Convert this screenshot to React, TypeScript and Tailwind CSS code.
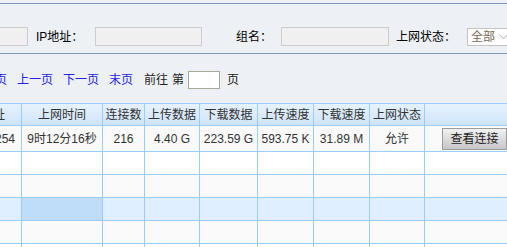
import React from 'react'

const font = { fontFamily: '"Liberation Sans", "Noto Sans CJK SC", sans-serif' }

const cols = ['w-[82px]', 'w-[81px]', 'w-[42px]', 'w-[55px]', 'w-[58px]', 'w-[56px]', 'w-[56px]', 'w-[55px]', 'w-[100px]']

const headers = ['IP地址', '上网时间', '连接数', '上传数据', '下载数据', '上传速度', '下载速度', '上网状态', '']

const dataRow = ['192.168.1.254', '9时12分16秒', '216', '4.40 G', '223.59 G', '593.75 K', '31.89 M', '允许']

function Cell({ i, children, className = '' }: { i: number; children?: React.ReactNode; className?: string }) {
  return (
    <div
      className={`${cols[i]} shrink-0 border-r border-b border-[#99ccff] flex items-center justify-center overflow-hidden whitespace-nowrap ${className}`}
    >
      {children}
    </div>
  )
}

export default function App() {
  const emptyRows = ['bg-white', 'bg-[#fafafa]', 'bg-[#e0efff]', 'bg-[#fafafa]']

  return (
    <div className="w-[507px] h-[247px] overflow-hidden bg-[#edf1f5] pt-[3px] text-[12px] text-[#222]" style={font}>
      {/* filter panel */}
      <div className="h-[51px] border-y border-[#7d99b9] pt-[23px]">
        <div className="flex items-center">
          <input className="ml-[-80px] w-[108px] h-[19px] bg-[#f0f0f0] border border-[#cccccc] shrink-0" />
          <span className="ml-[8px] w-[48px] shrink-0 text-black">IP地址：</span>
          <input className="ml-[11px] w-[107px] h-[19px] bg-[#f0f0f0] border border-[#cccccc] shrink-0" />
          <span className="ml-[34px] w-[36px] shrink-0 text-black">组名：</span>
          <input className="ml-[9px] w-[108px] h-[19px] bg-[#f0f0f0] border border-[#cccccc] shrink-0" />
          <span className="ml-[7px] w-[60px] shrink-0 text-black">上网状态：</span>
          <div className="ml-[11px] w-[60px] h-[18px] shrink-0 bg-white border border-[#c4c4c4] flex items-center pl-[3px] text-[#7a6a5a]">
            全部
            <svg className="ml-[4px]" width="9" height="6" viewBox="0 0 9 6">
              <path d="M0.5 0.5 L4.5 5 L8.5 0.5" fill="none" stroke="#b0b0b0" strokeWidth="1" />
            </svg>
          </div>
        </div>
      </div>

      {/* pager */}
      <div className="flex items-center h-[18px] mt-[17px] whitespace-nowrap">
        <span className="ml-[-17px] w-[24px] shrink-0 text-[#2222ee]">首页</span>
        <span className="ml-[10px] w-[36px] shrink-0 text-[#2222ee]">上一页</span>
        <span className="ml-[10px] w-[36px] shrink-0 text-[#2222ee]">下一页</span>
        <span className="ml-[10px] w-[24px] shrink-0 text-[#2222ee]">末页</span>
        <span className="ml-[11px] w-[24px] shrink-0">前往</span>
        <span className="ml-[4px] w-[12px] shrink-0">第</span>
        <input className="ml-[4px] w-[32px] h-[18px] shrink-0 bg-white border border-[#a8a898]" />
        <span className="ml-[7px] shrink-0">页</span>
      </div>

      {/* table */}
      <div className="mt-[14px] ml-[-60px] border-t border-[#99ccff] text-[#333]">
        <div className="flex h-[22px] bg-gradient-to-b from-[#e6f2fe] to-[#cde3f9]">
          {headers.map((h, i) => (
            <Cell key={i} i={i} className={i === 0 ? 'justify-end pr-[16px]' : ''}>
              {h}
            </Cell>
          ))}
        </div>
        <div className="flex h-[26px] bg-[#fafafa]">
          {dataRow.map((d, i) => (
            <Cell key={i} i={i} className={i === 0 ? 'justify-end pr-[6px]' : ''}>
              {d}
            </Cell>
          ))}
          <Cell i={8}>
            <button className="w-[65px] h-[22px] border border-[#9c9c9c] bg-gradient-to-b from-[#f2f2f2] to-[#c6c6c6] text-[#222] text-[12px]">
              查看连接
            </button>
          </Cell>
        </div>
        {emptyRows.map((bg, r) => (
          <div key={r} className={`flex h-[23px] ${bg}`}>
            {cols.map((_, i) => (
              <Cell key={i} i={i} className={r === 2 && i === 1 ? 'bg-[#bfdcf8]' : ''} />
            ))}
          </div>
        ))}
        <div className="flex h-[23px] bg-white">
          {cols.map((_, i) => (
            <Cell key={i} i={i} />
          ))}
        </div>
      </div>
    </div>
  )
}
